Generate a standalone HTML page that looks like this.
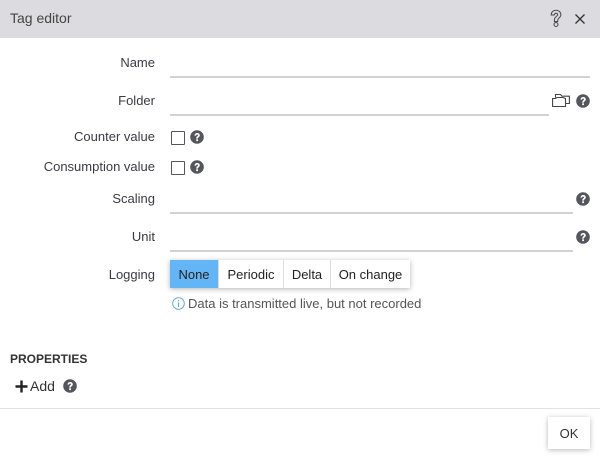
<!DOCTYPE html>
<html><head><meta charset="utf-8"><style>
html,body{margin:0;padding:0;background:#fff}
#p{position:relative;width:600px;height:457px;overflow:hidden;background:#fff;font-family:"Liberation Sans",sans-serif;font-size:13px;color:#333}
#p>*{position:absolute}
.l{right:445px;white-space:nowrap;line-height:16px;color:#3a3a44}
.u{height:2px;background:#d2d2d2;left:170px}
.cb{width:12px;height:12px;left:171px;border:1px solid #55555d;border-radius:1px;background:#fff}
.h{width:14px;height:14px}
.seg{top:260px;left:170px;height:28px;display:flex;box-shadow:0 1px 5px rgba(0,0,0,.3);background:#fff;line-height:29px;color:#222}
.seg div{border-left:1px solid #ddd;text-align:center;box-sizing:border-box}
</style></head><body><div id="p">
<div style="left:0;top:0;width:600px;height:38px;background:#dbdbe0"></div>
<div style="left:10px;top:10px;font-size:14px;line-height:17px;color:#444">Tag editor</div>
<svg style="left:548px;top:9px" width="16" height="19" viewBox="0 0 16 19" fill="none" stroke="#4a4a4a" stroke-width="1"><path d="M3.200 6C3.200 3 5.300 1.300 8 1.300S12.900 3 12.900 5.800c0 2.900-3.200 3.300-3.200 5.400v1.300H6.400v-2c0-2.900 3.300-3.100 3.300-4.700 0-1-.7-1.600-1.700-1.600S6.400 4.900 6.300 6z"/><circle cx="8" cy="15.500" r="2"/></svg>
<svg style="left:574px;top:13px" width="12" height="12" viewBox="0 0 12 12" stroke="#333" stroke-width="1.300"><path d="M1.500 1.500l9 9M10.500 1.500l-9 9"/></svg>

<div class="l" style="top:55px">Name</div>
<div class="u" style="top:76px;width:420px"></div>
<div class="l" style="top:93px">Folder</div>
<div class="u" style="top:114px;width:379px"></div>
<svg style="left:552px;top:93px" width="18" height="15" viewBox="0 0 18 15" fill="none" stroke="#444" stroke-width="1.100"><path d="M3.500 4.500V1.500H8.500L10 3.200H17.400V10.500H13.800"/><path d="M.6 13.500V5.500H3.500L5 4.500H11L13.500 5.500V13.500Z"/></svg>
<svg class="h" style="left:576px;top:94px"><use href="#q"/></svg>

<div class="l" style="top:129px">Counter value</div>
<div class="cb" style="top:131px"></div>
<svg class="h" style="left:190px;top:130px"><use href="#q"/></svg>
<div class="l" style="top:159px">Consumption value</div>
<div class="cb" style="top:161px"></div>
<svg class="h" style="left:190px;top:160px"><use href="#q"/></svg>

<div class="l" style="top:191px">Scaling</div>
<div class="u" style="top:212px;width:403px"></div>
<svg class="h" style="left:576px;top:192px"><use href="#q"/></svg>
<div class="l" style="top:229px">Unit</div>
<div class="u" style="top:250px;width:403px"></div>
<svg class="h" style="left:576px;top:230px"><use href="#q"/></svg>

<div class="l" style="top:267px">Logging</div>
<div class="seg">
<div style="width:48px;background:#64b5f6;border-left:0">None</div>
<div style="width:65px">Periodic</div>
<div style="width:47px">Delta</div>
<div style="width:80px">On change</div>
</div>
<svg style="left:172px;top:297px" width="13" height="13" viewBox="0 0 13 13" fill="none" stroke="#64a9e6" stroke-width="1"><circle cx="6.500" cy="6.500" r="5.800"/><path d="M6.500 5.500v4.500M6.500 3v1.400" stroke-width="1.200"/></svg>
<div style="left:188px;top:296px;line-height:16px;color:#555;white-space:nowrap;font-size:13px">Data is transmitted live, but not recorded</div>

<div style="left:10px;top:351px;line-height:16px;font-weight:bold;font-size:12px;color:#333">PROPERTIES</div>
<svg style="left:15px;top:380px" width="13" height="13" viewBox="0 0 13 13" fill="#222"><path d="M5.300 .5h2.400v4.800h4.800v2.400H7.700v4.800H5.300V7.700H.5V5.300h4.800z"/></svg>
<div style="left:30px;top:378px;font-size:14px;line-height:17px;color:#333">Add</div>
<svg class="h" style="left:63px;top:379px"><use href="#q"/></svg>

<div style="left:0;top:408px;width:600px;height:1px;background:#e2e2e2"></div>
<div style="left:548px;top:417px;width:42px;height:32px;background:#fff;box-shadow:0 1px 5px rgba(0,0,0,.28);text-align:center;line-height:33px;font-size:13px;color:#333">OK</div>

<svg width="0" height="0" style="left:0;top:0"><defs><g id="q"><circle cx="7" cy="7" r="6.800" fill="#55555d"/><path d="M4.500 5.600C4.600 4 5.700 3 7.200 3c1.500 0 2.600 1 2.600 2.300 0 1.800-1.900 1.900-1.900 3.300H6.200c0-2.200 1.800-2.300 1.800-3.300 0-.4-.4-.8-.9-.8-.6 0-.9.400-1 1.100z" fill="#fff"/><rect x="6.200" y="9.300" width="1.800" height="1.800" fill="#fff"/></g></defs></svg>
</div></body></html>
